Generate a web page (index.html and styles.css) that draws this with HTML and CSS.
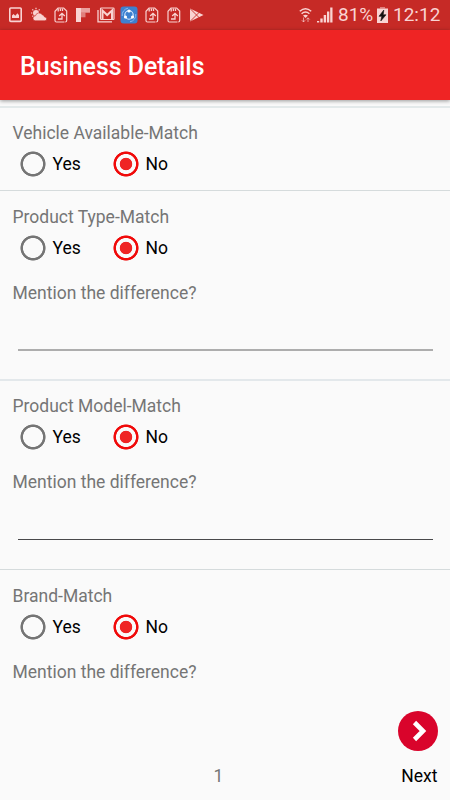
FILE: index.html
```html
<!DOCTYPE html>
<html lang="en">
<head>
<meta charset="utf-8">
<title>Business Details</title>
<link rel="stylesheet" href="styles.css">
</head>
<body>
<svg width="0" height="0" class="defs">
  <symbol id="backup" viewBox="0 0 14 16"><path d="M10.5 15H2.5Q1 15 1 13.5V4.3L4 1H9.7L12.7 4V13.5Q12.7 15 11.2 15" fill="none" stroke="currentColor" stroke-width="1.2"/><path d="M4.2 1.5V4.5M6.4 1.5V4M8.5 1.5V4M4 12H8V7M5.2 9 8 6.3 10.8 9" fill="none" stroke="currentColor" stroke-width="1.3"/></symbol>
</svg>
<div class="screen">
  <div class="status">
    <div class="notifications">
      <svg width="14" height="16" viewBox="0 0 14 16"><rect x="1.8" y="1" width="11.4" height="13.4" rx="1" fill="none" stroke="currentColor" stroke-width="1.6"/><path d="M4 11V8.5L5.5 7 7.3 8.8 9.5 6.3 11 8.2V11Z" fill="currentColor"/></svg>
      <svg width="17" height="16" viewBox="0 0 17 16"><circle cx="6" cy="6" r="3" fill="currentColor"/><path d="M6 .8V2.2M1 6H2.3M2.4 2.4 3.3 3.3M9.6 2.4 8.7 3.3M2.4 9.6 3.3 8.7" stroke="currentColor" stroke-width="1.2"/><path d="M5.5 13.8A2.5 2.5 0 0 1 5.5 8.8 3.6 3.6 0 0 1 12.2 7.8 2.5 2.5 0 0 1 14.5 10 1.9 1.9 0 0 1 15 13.8Z" fill="currentColor" stroke="#c62a26" stroke-width=".6"/></svg>
      <svg width="14" height="16"><use href="#backup"/></svg>
      <svg width="14" height="16" viewBox="0 0 14 16"><path d="M0 1H5V15H0Z" fill="currentColor"/><path d="M5 1H14V5.7H5Z" fill="currentColor" opacity=".7"/><path d="M5 5.7H9.5V10.3H5Z" fill="currentColor" opacity=".5"/></svg>
      <svg width="18" height="16" viewBox="0 0 18 16"><path d="M1 3V14.8H15" fill="none" stroke="currentColor" stroke-width="1.3"/><rect x="3.5" y="1" width="13.5" height="11.5" rx=".8" fill="none" stroke="currentColor" stroke-width="1.2"/><path d="M5.5 12V3.5L10.2 8 15 3.5V12" fill="none" stroke="currentColor" stroke-width="2"/></svg>
      <svg width="18" height="18" viewBox="0 0 18 18"><rect x=".5" y=".5" width="17" height="17" rx="3" fill="#3d80cf"/><circle cx="9" cy="9" r="4.2" fill="none" stroke="#dceaff" stroke-width="1.1"/><path d="M2.2 10A7 7 0 0 1 8 2.2M15.8 8A7 7 0 0 1 10 15.8" fill="none" stroke="#8db9ee"/><circle cx="9" cy="5" r="1.6" fill="#fff"/><circle cx="5.5" cy="11" r="1.6" fill="#fff"/><circle cx="12.5" cy="11" r="1.6" fill="#fff"/></svg>
      <svg width="14" height="16"><use href="#backup"/></svg>
      <svg width="14" height="16"><use href="#backup"/></svg>
      <svg width="15" height="16" viewBox="0 0 15 16"><path d="M1 1.5 14.5 8 1 14.5Z" fill="currentColor"/><path d="M1 1.5 10.5 11M1 14.5 10.5 5" stroke="#c62a26" stroke-width=".9"/></svg>
    </div>
    <div class="system">
      <svg width="13" height="16" viewBox="0 0 13 16"><path d="M.8 4.2Q6.5-.8 12.2 4.2M2.6 6.7Q6.5 3.3 10.4 6.7" fill="none" stroke="currentColor" stroke-width="1.5"/><path d="M4 8.6Q6.5 6.8 9 8.6L6.5 11Z" fill="currentColor"/><path d="M4.5 10.5V15M2.8 13.2 4.5 15 6.2 13.2M9 15V11M7.3 12.5 9 10.8 10.7 12.5" fill="none" stroke="currentColor" opacity=".65"/></svg>
      <svg class="signal" width="16" height="16" viewBox="0 0 16 16"><path d="M0 14H2.2V15.5H0ZM3.3 11.5H5.7V15.5H3.3ZM6.7 8H9.1V15.5H6.7ZM10 4.5H12.3V15.5H10ZM13.2.5H15.5V15.5H13.2Z" fill="currentColor"/></svg>
      <span class="percent">81%</span>
      <svg class="battery" width="11" height="16" viewBox="0 0 11 16"><path d="M3 0H8V1.5H3Z" fill="currentColor" opacity=".5"/><path d="M0 1.5H11V16H0Z" fill="currentColor"/><path d="M6.8 3 2 9.3H4.8L3.8 14 9 7.8H6.2Z" fill="#171010" stroke="#171010" stroke-width=".6"/></svg>
      <span class="clock">12:12</span>
    </div>
  </div>
  <header class="appbar"><h1>Business Details</h1></header>
  <main class="form">
    <section class="question first">
      <div class="label">Vehicle Available-Match</div>
      <div class="options"><div class="option"><i class="radio"></i>Yes</div><div class="option"><i class="radio checked"></i>No</div></div>
    </section>
    <section class="question">
      <div class="label">Product Type-Match</div>
      <div class="options"><div class="option"><i class="radio"></i>Yes</div><div class="option"><i class="radio checked"></i>No</div></div>
      <div class="label mention">Mention the difference?</div>
      <div class="field soft"></div>
    </section>
    <section class="question model">
      <div class="label">Product Model-Match</div>
      <div class="options"><div class="option"><i class="radio"></i>Yes</div><div class="option"><i class="radio checked"></i>No</div></div>
      <div class="label mention">Mention the difference?</div>
      <div class="field"></div>
    </section>
    <section class="question last">
      <div class="label">Brand-Match</div>
      <div class="options"><div class="option"><i class="radio"></i>Yes</div><div class="option"><i class="radio checked"></i>No</div></div>
      <div class="label mention">Mention the difference?</div>
    </section>
  </main>
  <footer class="footer">
    <svg class="next" width="40" height="40" viewBox="0 0 40 40"><circle cx="20" cy="20" r="20" fill="#d9042b"/><path d="M16.5 11.5 25 20 16.5 28.5" fill="none" stroke="#fff" stroke-width="4.6"/></svg>
    <div class="pager"><span class="page">1</span><span class="next-text">Next</span></div>
  </footer>
</div>
</body>
</html>
```
FILE: styles.css
```css
* { box-sizing: border-box; }
body { margin: 0; font-family: Roboto, "Liberation Sans", sans-serif; background: #fafafa; }
.defs { display: block; position: absolute; }
.screen { width: 450px; height: 800px; display: flex; flex-direction: column; overflow: hidden; }
.status { height: 30px; flex: none; background: #c62a26; color: #f9d3d2; display: flex; justify-content: space-between; align-items: center; padding: 0 10px 0 8px; }
.notifications { display: flex; align-items: center; gap: 8px; margin-top: -1px; }
.notifications svg, .system svg { display: block; flex: none; }
.notifications svg:nth-child(2) { margin-right: -1px; }
.notifications svg:nth-child(5) { margin: 0 -3px 0 -1px; }
.notifications svg:nth-child(7) { margin-left: -1px; }
.system { display: flex; align-items: center; font-size: 19px; line-height: 30px; }
.signal { margin-left: 5px; }
.percent { margin-left: 5px; width: 35px; white-space: nowrap; }
.battery { margin-left: 4px; }
.clock { margin-left: 5px; width: 47px; white-space: nowrap; }
.appbar { height: 70px; flex: none; background: #ef2424; padding-left: 20px; display: flex; align-items: center; box-shadow: 0 1px 4px rgba(0,0,0,.4); margin-bottom: 6px; padding-top: 3px; }
h1 { margin: 0; color: #fff; font-size: 24.9px; font-weight: 500; line-height: 30px; }
.form { flex: none; }
.question { height: 189px; border-top: 1px solid #d5dbdc; padding: 14px 13px 0 12.5px; }
.question.first { height: 84px; border-top: 2px solid #e3e9ea; padding-top: 13px; }
.question.model { height: 190px; border-top: 2px solid #e3e8eb; padding-top: 13px; }
.question.last { height: 131px; }
.label { font-size: 17.5px; line-height: 24px; color: #757575; white-space: nowrap; }
.options { display: flex; padding-left: 7px; height: 38px; align-items: center; }
.option { display: flex; align-items: center; width: 93px; gap: 7px; font-size: 17.5px; line-height: 24px; color: #000; }
.radio { display: block; width: 26px; height: 26px; flex: none; background: radial-gradient(circle, transparent 9.6px, #757575 10.3px, #757575 12.2px, transparent 12.9px); }
.radio.checked { background: radial-gradient(circle, #ef2424 5.9px, transparent 6.6px, transparent 9.6px, #f00a0a 10.3px, #f00a0a 12.2px, transparent 12.9px); }
.mention { margin-top: 14px; }
.field { height: 46px; margin: 0 4.5px 0 5px; border-bottom: 1px solid #48484a; }
.field.soft { border-bottom: 2px solid #adadad; }
.footer { flex: 1; display: flex; flex-direction: column; padding: 11px 12.5px 0; }
.next { align-self: flex-end; }
.pager { display: grid; grid-template-columns: 1fr auto 1fr; align-items: center; margin-top: 13px; font-size: 17.5px; line-height: 24px; }
.page { grid-column: 2; color: #757575; margin-right: 13px; }
.next-text { text-align: right; color: #000; }
```
